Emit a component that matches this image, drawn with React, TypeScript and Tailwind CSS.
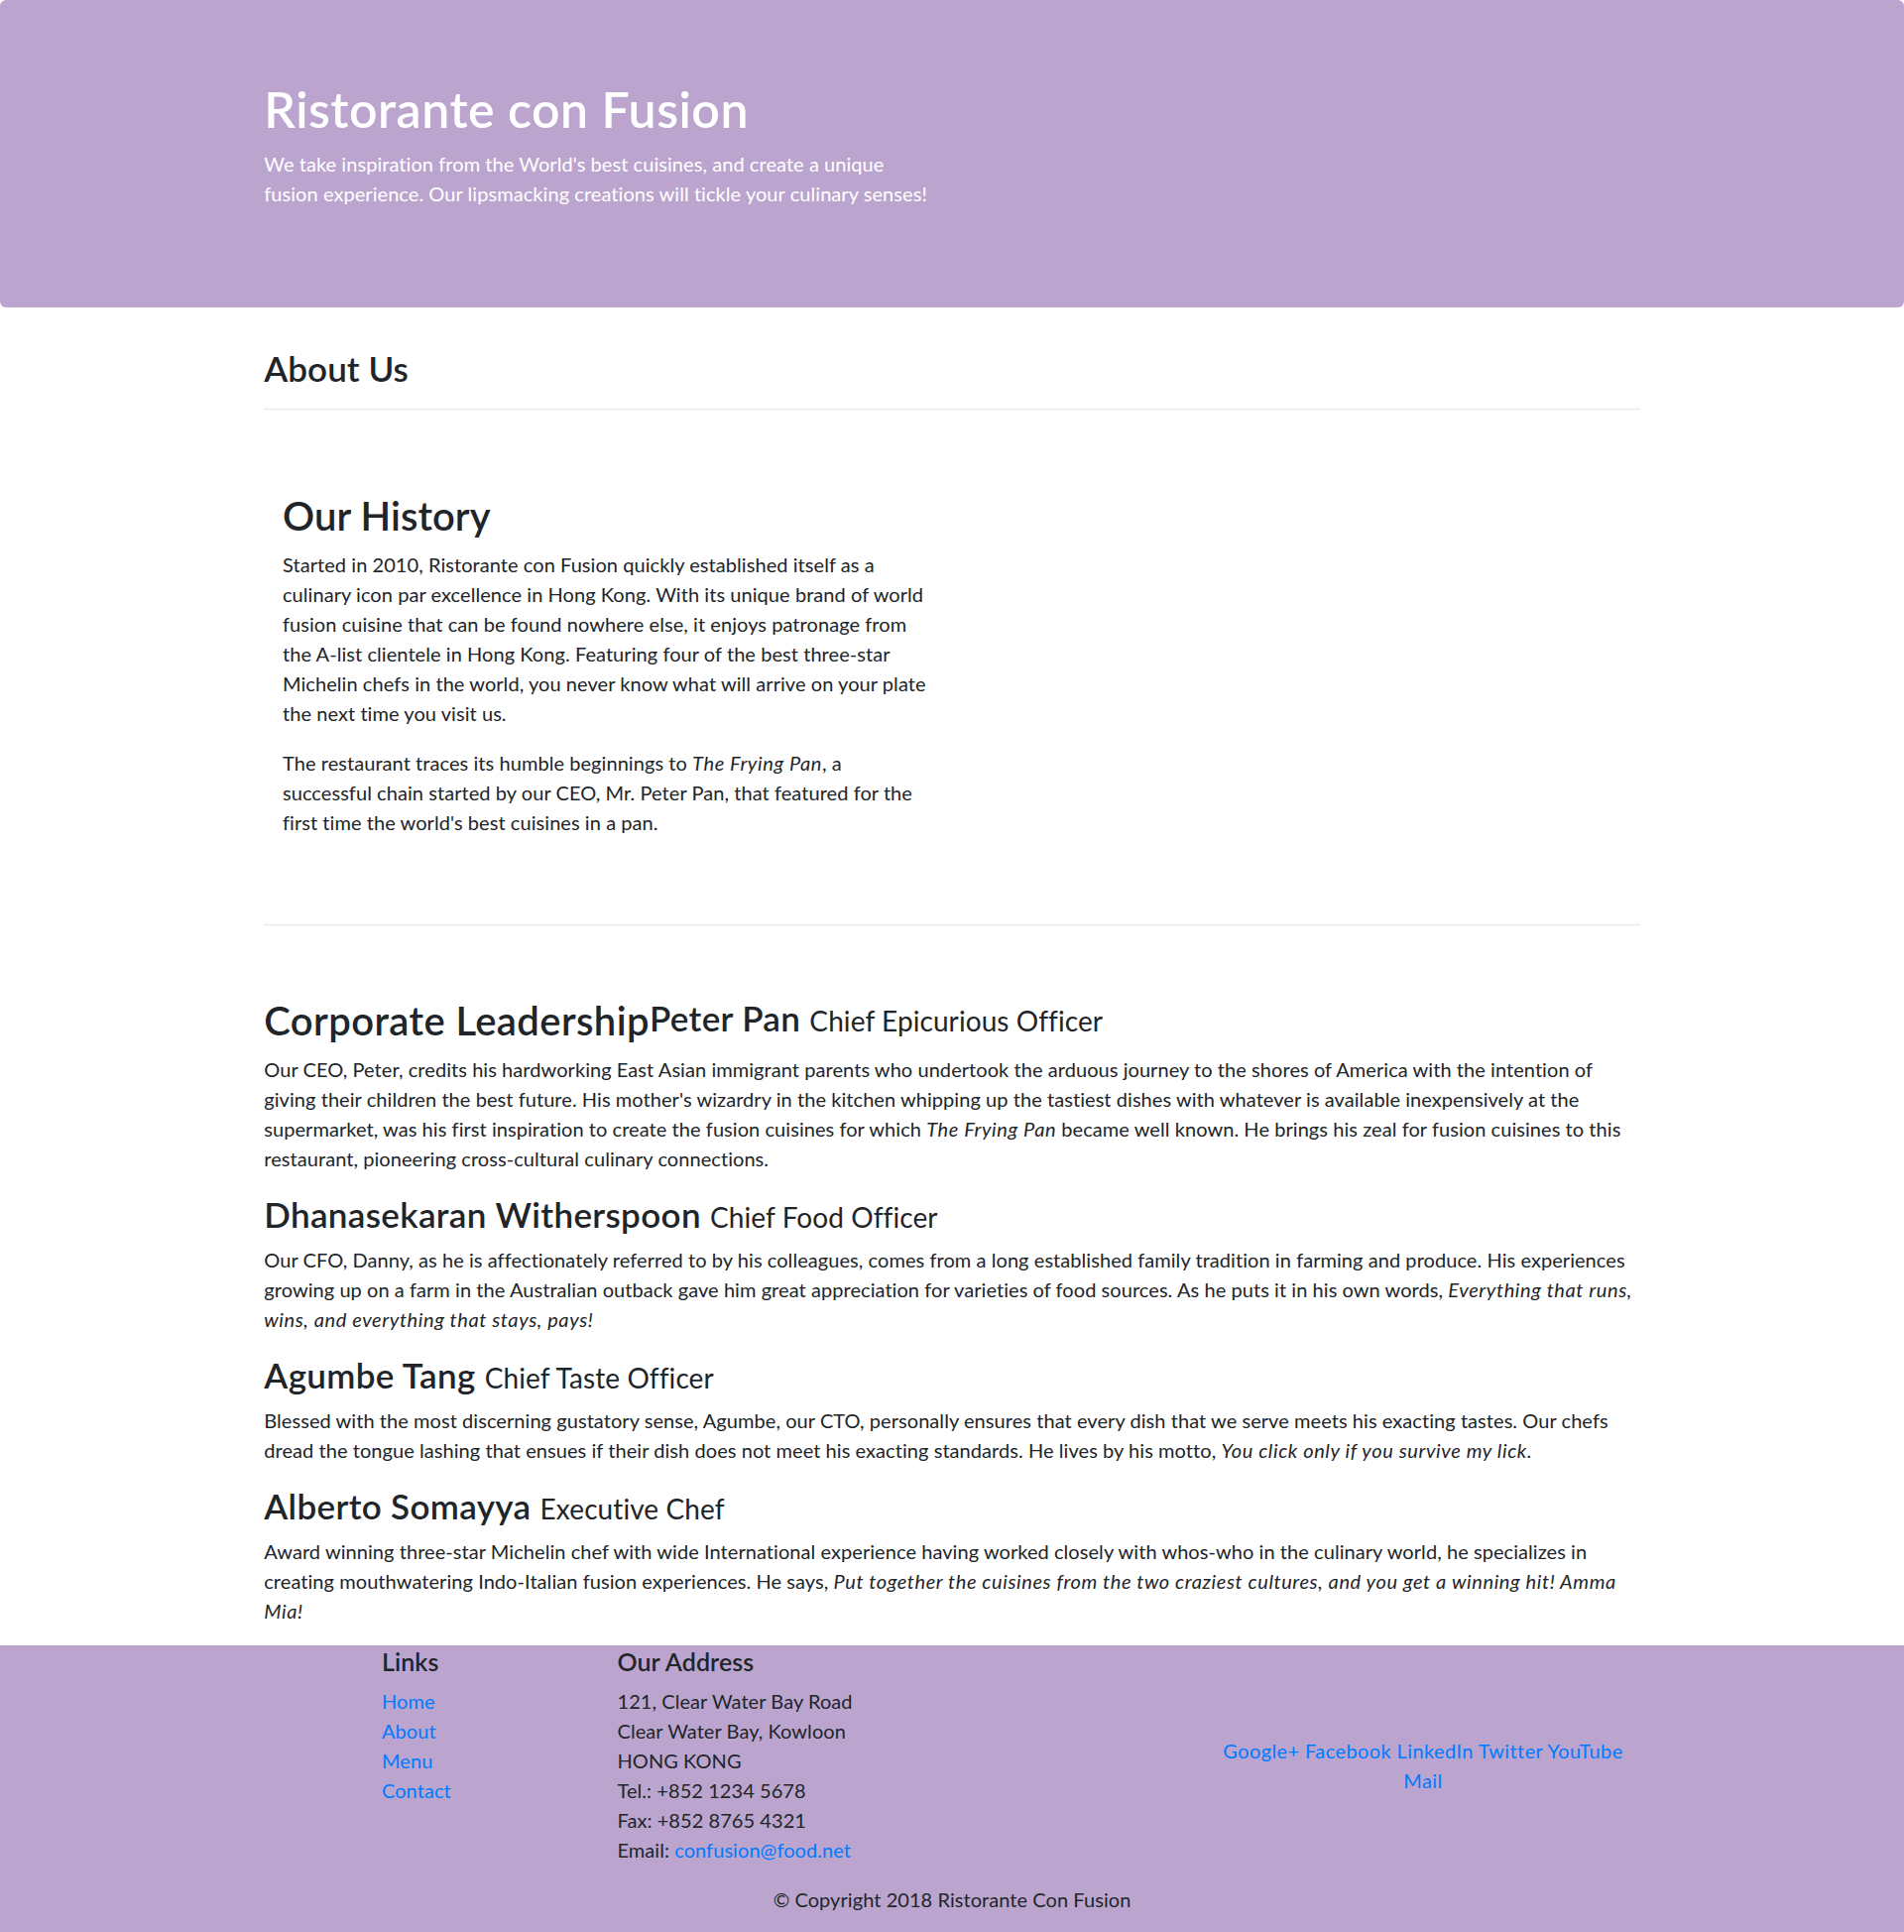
import React from "react";

const leaders = [
  {
    name: "Dhanasekaran Witherspoon",
    designation: "Chief Food Officer",
    body: (
      <>
        Our CFO, Danny, as he is affectionately referred to by his colleagues, comes from a long established family
        tradition in farming and produce. His experiences growing up on a farm in the Australian outback gave him great
        appreciation for varieties of food sources. As he puts it in his own words,{" "}
        <em className="tracking-[0.03em]">Everything that runs, wins, and everything that stays, pays!</em>
      </>
    ),
  },
  {
    name: "Agumbe Tang",
    designation: "Chief Taste Officer",
    body: (
      <>
        Blessed with the most discerning gustatory sense, Agumbe, our CTO, personally ensures that every dish that we
        serve meets his exacting tastes. Our chefs dread the tongue lashing that ensues if their dish does not meet his
        exacting standards. He lives by his motto,{" "}
        <em className="tracking-[0.03em]">You click only if you survive my lick.</em>
      </>
    ),
  },
  {
    name: "Alberto Somayya",
    designation: "Executive Chef",
    body: (
      <>
        Award winning three-star Michelin chef with wide International experience having worked closely with whos-who
        in the culinary world, he specializes in creating mouthwatering Indo-Italian fusion experiences. He says,{" "}
        <em className="tracking-[0.03em]">
          Put together the cuisines from the two craziest cultures, and you get a winning hit! Amma Mia!
        </em>
      </>
    ),
  },
];

function LeaderHeading({ name, designation }: { name: string; designation: string }) {
  return (
    <h3 className="mb-[10px] text-[35px] leading-[42px] font-semibold tracking-[0.01em]">
      {name}{" "}
      <span className="text-[28px] leading-[1.2] font-normal tracking-[0.003em]">{designation}</span>
    </h3>
  );
}

export default function App() {
  return (
    <div className="flex min-h-screen flex-col bg-white font-['Lato',sans-serif] text-[20px] leading-[30px] tracking-[0.003em] text-[#212529]">
      <header className="mb-[40px] rounded-[6px] bg-[#bba5cf] py-[80px]">
        <div className="mx-auto w-[1387.5px]">
          <div className="w-[675px]">
            <h1 className="mb-[10px] text-[50px] leading-[60px] font-semibold tracking-[0.01em] text-white">
              Ristorante con Fusion
            </h1>
            <p className="mb-[20px] text-white">
              We take inspiration from the World's best cuisines, and create a unique fusion experience. Our
              lipsmacking creations will tickle your culinary senses!
            </p>
          </div>
        </div>
      </header>

      <main className="mx-auto w-[1387.5px]">
        <h3 className="mb-[20px] text-[35px] leading-[42px] font-semibold">About Us</h3>
        <div className="mb-[20px] h-px bg-[#e6e6e6]" />

        <section className="min-h-[500px] border-b border-[#e6e6e6] pt-[62.5px]">
          <div className="w-[693.75px] px-[18.75px]">
            <h2 className="mb-[10px] text-[40px] leading-[48px] font-semibold">Our History</h2>
            <p className="mb-[20px]">
              Started in 2010, Ristorante con Fusion quickly established itself as a culinary icon par excellence in
              Hong Kong. With its unique brand of world fusion cuisine that can be found nowhere else, it enjoys
              patronage from the A-list clientele in Hong Kong. Featuring four of the best three-star Michelin chefs in
              the world, you never know what will arrive on your plate the next time you visit us.
            </p>
            <p className="mb-[20px]">
              The restaurant traces its humble beginnings to <em className="tracking-[0.03em]">The Frying Pan</em>, a
              successful chain started by our CEO, Mr. Peter Pan, that featured for the first time the world's best
              cuisines in a pan.
            </p>
          </div>
        </section>

        <section className="pt-[72px]">
          <div className="flex items-start">
            <h2 className="mb-[10px] text-[40px] leading-[48px] font-semibold tracking-[0.01em]">
              Corporate Leadership
            </h2>
            <LeaderHeading name="Peter Pan" designation="Chief Epicurious Officer" />
          </div>
          <p className="mb-[20px]">
            Our CEO, Peter, credits his hardworking East Asian immigrant parents who undertook the arduous journey to the
            shores of America with the intention of giving their children the best future. His mother's wizardry in the
            kitchen whipping up the tastiest dishes with whatever is available inexpensively at the supermarket, was his
            first inspiration to create the fusion cuisines for which{" "}
            <em className="tracking-[0.03em]">The Frying Pan</em> became well known. He brings his zeal for fusion
            cuisines to this restaurant, pioneering cross-cultural culinary connections.
          </p>
          {leaders.map((l) => (
            <div key={l.name}>
              <LeaderHeading name={l.name} designation={l.designation} />
              <p className="mb-[20px]">{l.body}</p>
            </div>
          ))}
        </section>
      </main>

      <footer className="grow bg-[#bba5cf] pt-px">
        <div className="mx-auto flex w-[1425px] pl-[118.75px]">
          <div className="w-[237.5px] px-[18.75px]">
            <h5 className="mb-[10px] text-[25px] leading-[30px] font-semibold">Links</h5>
            <ul>
              {["Home", "About", "Menu", "Contact"].map((item) => (
                <li key={item}>
                  <a href="#" className="text-[#007bff]">
                    {item}
                  </a>
                </li>
              ))}
            </ul>
          </div>
          <div className="w-[593.75px] px-[18.75px]">
            <h5 className="mb-[10px] text-[25px] leading-[30px] font-semibold">Our Address</h5>
            <address className="mb-[20px] not-italic">
              121, Clear Water Bay Road
              <br />
              Clear Water Bay, Kowloon
              <br />
              HONG KONG
              <br />
              Tel.: +852 1234 5678
              <br />
              Fax: +852 8765 4321
              <br />
              Email:{" "}
              <a href="#" className="text-[#007bff]">
                confusion@food.net
              </a>
            </address>
          </div>
          <div className="w-[475px] self-center px-[18.75px] text-center tracking-[0.02em]">
            <a href="#" className="text-[#007bff]">Google+</a>{" "}
            <a href="#" className="text-[#007bff]">Facebook</a>{" "}
            <a href="#" className="text-[#007bff]">LinkedIn</a>{" "}
            <a href="#" className="text-[#007bff]">Twitter</a>{" "}
            <a href="#" className="text-[#007bff]">YouTube</a>{" "}
            <a href="#" className="text-[#007bff]">Mail</a>
          </div>
        </div>
        <p className="pb-[18px] text-center">© Copyright 2018 Ristorante Con Fusion</p>
      </footer>
    </div>
  );
}
